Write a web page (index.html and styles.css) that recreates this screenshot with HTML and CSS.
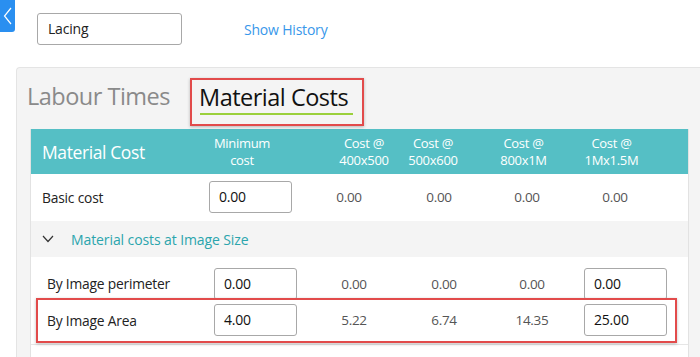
FILE: index.html
```html
<!DOCTYPE html>
<html lang="en">
<head>
    <meta charset="UTF-8">
    <meta name="viewport" content="width=device-width, initial-scale=1.0">
    <title>Material Costs</title>
    <link rel="stylesheet" href="styles.css">
</head>
<body>
    <button id="back">
        <svg width="10" height="18" viewBox="0 0 10 18"><path d="M8 1 L1.5 9 L8 17" fill="none" stroke="#fff" stroke-width="1.2"/></svg>
    </button>

    <div id="topbar">
        <div class="name-box">Lacing</div>
        <a class="history" href="#">Show History</a>
    </div>

    <div id="panel">
        <div class="tabs">
            <div class="tab">Labour Times</div>
            <div class="tab active">Material Costs</div>
        </div>

        <div class="costs">
            <div class="row head">
                <div class="title">Material Cost</div>
                <div class="col">Minimum<br>cost</div>
                <div class="col">Cost @<br>400x500</div>
                <div class="col">Cost @<br>500x600</div>
                <div class="col">Cost @<br>800x1M</div>
                <div class="col">Cost @<br>1Mx1.5M</div>
            </div>

            <div class="row basic">
                <div class="label">Basic cost</div>
                <div class="cell"><div class="box">0.00</div></div>
                <div class="val">0.00</div>
                <div class="val">0.00</div>
                <div class="val">0.00</div>
                <div class="val">0.00</div>
            </div>

            <div class="group">
                <svg width="12" height="8" viewBox="0 0 12 8"><path d="M1 1 L6 6.5 L11 1" fill="none" stroke="#333" stroke-width="1.2"/></svg>
                <span>Material costs at Image Size</span>
            </div>

            <div class="sub">
                <div class="row first">
                    <div class="label">By Image perimeter</div>
                    <div class="cell"><div class="box">0.00</div></div>
                    <div class="val">0.00</div>
                    <div class="val">0.00</div>
                    <div class="val">0.00</div>
                    <div class="cell"><div class="box">0.00</div></div>
                </div>
                <div class="row marked">
                    <div class="label">By Image Area</div>
                    <div class="cell"><div class="box">4.00</div></div>
                    <div class="val">5.22</div>
                    <div class="val">6.74</div>
                    <div class="val">14.35</div>
                    <div class="cell"><div class="box">25.00</div></div>
                </div>
            </div>
        </div>
    </div>
</body>
</html>
```

FILE: styles.css
```css
body {
    margin: 0;
    padding: 0;
    font-family: "Open Sans", "Noto Sans", sans-serif;
    background-color: #ffffff;
    color: #222;
    overflow: hidden;
}

#back {
    position: absolute;
    top: 0;
    left: 0;
    width: 15px;
    height: 32px;
    padding: 0;
    border: none;
    border-radius: 0 0 3px 0;
    background-color: #2a8ff0;
    display: flex;
    align-items: center;
    justify-content: center;
}

#topbar {
    display: flex;
    align-items: center;
    padding: 13px 0 0 37px;
    height: 32px;
}

.name-box {
    width: 133px;
    height: 30px;
    padding-left: 10px;
    border: 1px solid #a8a8a8;
    border-radius: 3px;
    font-size: 14px;
    line-height: 30px;
    letter-spacing: -0.2px;
    color: #222;
}

.history {
    margin-left: 62px;
    font-size: 14px;
    letter-spacing: -0.2px;
    color: #3897ea;
    text-decoration: none;
}

#panel {
    margin: 22px 0 0 16px;
    height: 279px;
    background-color: #f4f4f4;
    border-top: 1px solid #e4e4e4;
    border-left: 1px solid #e4e4e4;
    border-radius: 4px 0 0 0;
    padding: 10px 0 0 10px;
}

/* tabs */
.tabs {
    display: flex;
    align-items: flex-start;
    height: 51px;
}

.tab {
    font-size: 23.5px;
    letter-spacing: -0.5px;
    color: #8a8a8a;
    line-height: 32px;
    padding-top: 2px;
}

.tab.active {
    position: relative;
    margin-left: 20px;
    padding: 1px 14px 0 7px;
    height: 43px;
    color: #111;
    border: 2px solid #e24b4b;
    box-shadow: 0 1px 3px rgba(0, 0, 0, 0.25);
}

.tab.active::after {
    content: "";
    position: absolute;
    left: 8px;
    right: 9px;
    top: 33px;
    height: 2px;
    background-color: #9bd03c;
}

/* table */
.costs {
    margin-left: 3px;
    width: 657px;
    height: 228px;
    background-color: #ffffff;
    border-left: 1px solid #e2e2e2;
    border-right: 1px solid #e2e2e2;
}

.row {
    display: grid;
    grid-template-columns: 166px 106px 92px 88px 88px 88px;
    align-items: center;
}

.head {
    height: 45px;
    background-color: #55bfc5;
    color: #ffffff;
}

.head .title {
    padding-left: 11px;
    font-size: 17.5px;
    letter-spacing: -0.4px;
}

.head .col {
    text-align: center;
    font-size: 13px;
    line-height: 17px;
    letter-spacing: -0.3px;
}

.head .col:nth-child(2) {
    padding-right: 16px;
}

.head .col:nth-child(3) {
    padding-left: 30px;
}

.head .col:nth-child(4) {
    padding-right: 12px;
}

.head .col:nth-child(n+5) {
    padding-right: 7px;
}

.label {
    padding-left: 11px;
    font-size: 13.8px;
    letter-spacing: -0.2px;
    color: #222;
}

.val {
    text-align: center;
    font-size: 13.5px;
    letter-spacing: -0.3px;
    color: #555;
}

.cell {
    padding-left: 12px;
}

.box {
    width: 72px;
    height: 30px;
    padding-left: 9px;
    border: 1px solid #a8a8a8;
    border-radius: 3px;
    font-size: 14px;
    letter-spacing: -0.2px;
    line-height: 30px;
    color: #111;
    background-color: #ffffff;
}

.basic {
    height: 46px;
}

.group {
    display: flex;
    align-items: center;
    height: 36px;
    margin-top: 1px;
    padding-left: 11px;
    background-color: #f4f4f4;
    font-size: 14px;
    letter-spacing: -0.1px;
    color: #2ba5ad;
}

.group svg {
    margin-right: 17px;
}

.sub {
    padding-left: 5px;
    padding-bottom: 6px;
    border-bottom: 1px solid #e6e6e6;
}

.sub .row.first {
    height: 37px;
    padding-top: 8px;
}

.sub .row .cell:last-child {
    padding-left: 8px;
}

.marked {
    position: relative;
    height: 36px;
}

.marked::after {
    content: "";
    position: absolute;
    left: 0;
    top: -4px;
    width: 637px;
    height: 41px;
    border: 2px solid #e24b4b;
    box-shadow: 0 1px 3px rgba(0, 0, 0, 0.25);
}
```
